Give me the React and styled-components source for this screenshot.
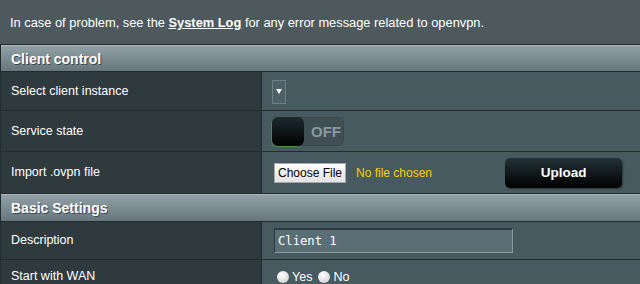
import styled, { createGlobalStyle } from "styled-components";

const GlobalStyle = createGlobalStyle`
  *, *::before, *::after {
    box-sizing: border-box;
  }
  body {
    margin: 0;
    background: #4d595d;
    font-family: "Liberation Sans", Arial, sans-serif;
    font-size: 12px;
    color: #fff;
    overflow: hidden;
  }
`;

const Page = styled.div`
  width: 660px;
  padding-top: 14px;
`;

const Intro = styled.p`
  margin: 0 0 13px 10px;
  line-height: 17px;
  font-size: 12.85px;

  a {
    color: #fff;
    font-weight: bold;
    text-decoration: underline;
  }
`;

const Table = styled.div`
  border-top: 1px solid #222b2e;
  border-left: 1px solid #222b2e;
`;

const Header = styled.div`
  height: ${(p) => p.h || 27}px;
  display: flex;
  align-items: center;
  padding-left: 10px;
  background: linear-gradient(#92a1a6, #66767c);
  border-top: 1px solid #a7b4b8;
  border-bottom: 1px solid #222b2e;
  font-weight: bold;
  font-size: 14px;
  text-shadow: 1px 1px 0 #3d484c;
`;

const Row = styled.div`
  display: grid;
  grid-template-columns: 261px 1fr;
  height: ${(p) => p.h || 39}px;
  border-bottom: 1px solid #222b2e;
`;

const Label = styled.div`
  background: #2f3a3e;
  border-right: 1px solid #222b2e;
  display: flex;
  align-items: center;
  padding-left: 10px;
  padding-bottom: 1px;
  font-size: 12.5px;
`;

const Cell = styled.div`
  background: #475a5f;
  display: flex;
  align-items: center;
  padding-left: 10px;
`;

const SelectBox = styled.div`
  width: 14px;
  height: 24px;
  border: 1px solid #6f8085;
  background: #4d6065;
  display: flex;
  align-items: center;
  justify-content: center;
  margin-top: 1px;

  &::after {
    content: "";
    border-left: 3px solid transparent;
    border-right: 3px solid transparent;
    border-top: 5px solid #fff;
  }
`;

const Toggle = styled.div`
  width: 72px;
  height: 29px;
  border-radius: 6px;
  background: #3f4f54;
  border: 1px solid #3a484c;
  display: flex;
  align-items: center;
`;

const Knob = styled.div`
  width: 32px;
  height: 29px;
  margin-left: -1px;
  border-radius: 6px;
  background: linear-gradient(#1d2a2e, #000);
  box-shadow: -1px 1px 0 #4c8a3e;
`;

const ToggleText = styled.span`
  font-weight: bold;
  font-size: 15px;
  color: #8c9a9e;
  margin-left: 7px;
`;

const FileButton = styled.div`
  width: 72px;
  height: 20px;
  margin-left: 2px;
  border: 1px solid #a9a9a9;
  background: linear-gradient(#fdfdfd, #e3e3e3);
  color: #000;
  font-size: 12px;
  display: flex;
  align-items: center;
  justify-content: center;
`;

const NoFile = styled.span`
  color: #fc0;
  margin-left: 10px;
  font-size: 12px;
`;

const Upload = styled.div`
  margin-left: 73px;
  width: 117px;
  height: 30px;
  border-radius: 5px;
  background: linear-gradient(#233237, #000);
  box-shadow: 1px 1px 2px #2b3538;
  display: flex;
  align-items: center;
  justify-content: center;
  font-weight: bold;
  font-size: 13.5px;
`;

const TextInput = styled.div`
  margin-left: 2px;
  width: 239px;
  height: 25px;
  background: #596e75;
  border-top: 2px solid #2e3b3f;
  border-left: 1px solid #2e3b3f;
  border-bottom: 1px solid #8a9ba0;
  border-right: 1px solid #8a9ba0;
  font-family: "DejaVu Sans Mono", "Liberation Mono", monospace;
  font-size: 12.2px;
  color: #fff;
  display: flex;
  align-items: center;
  padding-left: 3px;
`;

const Radio = styled.span`
  display: inline-flex;
  align-items: center;
  margin-left: ${(p) => p.ml || 0}px;
  font-size: 12.5px;

  &::before {
    content: "";
    width: 12px;
    height: 12px;
    border-radius: 50%;
    background: radial-gradient(circle at 40% 35%, #fff, #c8c8c8);
    margin-right: 3px;
  }
`;

export default function App() {
  return (
    <Page>
      <GlobalStyle />
      <Intro>
        In case of problem, see the <a>System Log</a> for any error message
        related to openvpn.
      </Intro>
      <Table>
        <Header>Client control</Header>
        <Row h={39}>
          <Label>Select client instance</Label>
          <Cell>
            <SelectBox />
          </Cell>
        </Row>
        <Row h={41}>
          <Label>Service state</Label>
          <Cell>
            <Toggle>
              <Knob />
              <ToggleText>OFF</ToggleText>
            </Toggle>
          </Cell>
        </Row>
        <Row h={42}>
          <Label>Import .ovpn file</Label>
          <Cell>
            <FileButton>Choose File</FileButton>
            <NoFile>No file chosen</NoFile>
            <Upload>Upload</Upload>
          </Cell>
        </Row>
        <Header h={28}>Basic Settings</Header>
        <Row h={38}>
          <Label>Description</Label>
          <Cell>
            <TextInput>Client 1</TextInput>
          </Cell>
        </Row>
        <Row h={34}>
          <Label>Start with WAN</Label>
          <Cell>
            <Radio ml={5}>Yes</Radio>
            <Radio ml={6}>No</Radio>
          </Cell>
        </Row>
      </Table>
    </Page>
  );
}
